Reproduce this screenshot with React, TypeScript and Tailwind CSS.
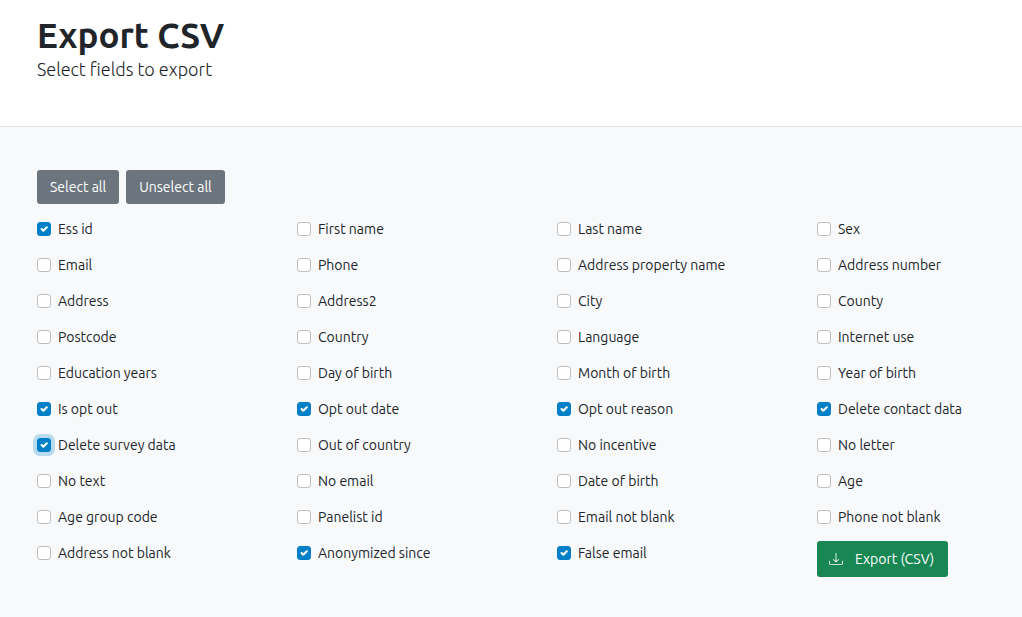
import { useState } from "react";

const FIELDS = [
  "Ess id", "First name", "Last name", "Sex",
  "Email", "Phone", "Address property name", "Address number",
  "Address", "Address2", "City", "County",
  "Postcode", "Country", "Language", "Internet use",
  "Education years", "Day of birth", "Month of birth", "Year of birth",
  "Is opt out", "Opt out date", "Opt out reason", "Delete contact data",
  "Delete survey data", "Out of country", "No incentive", "No letter",
  "No text", "No email", "Date of birth", "Age",
  "Age group code", "Panelist id", "Email not blank", "Phone not blank",
  "Address not blank", "Anonymized since", "False email",
];

const INITIAL = [
  "Ess id", "Is opt out", "Opt out date", "Opt out reason",
  "Delete contact data", "Delete survey data", "Anonymized since", "False email",
];

type FieldProps = {
  label: string;
  checked: boolean;
  focused: boolean;
  onChange: () => void;
};

function Field({ label, checked, focused, onChange }: FieldProps) {
  return (
    <label className="flex h-9 items-center gap-[7px] whitespace-nowrap">
      <span className="grid size-3.5 shrink-0">
        <input
          type="checkbox"
          checked={checked}
          autoFocus={focused}
          onChange={onChange}
          className="col-start-1 row-start-1 size-3.5 appearance-none rounded-[3px] border border-[#bfbfbf] bg-white outline-none checked:border-[#0080c8] checked:bg-[#0080c8] focus:ring-4 focus:ring-[#0080c8]/25"
        />
        {checked && (
          <svg viewBox="0 0 20 20" fill="none" aria-hidden="true" className="pointer-events-none z-10 col-start-1 row-start-1 size-3.5">
            <path d="M6.5 10l2.5 2.5 5-5" stroke="#fff" strokeWidth="3" strokeLinecap="round" strokeLinejoin="round" />
          </svg>
        )}
      </span>
      <span>{label}</span>
    </label>
  );
}

export default function App() {
  const [selected, setSelected] = useState<string[]>(INITIAL);
  const toggle = (name: string) =>
    setSelected((s) => (s.includes(name) ? s.filter((n) => n !== name) : [...s, name]));

  return (
    <div className="flex min-h-screen flex-col bg-[#f8f9fb] font-['Ubuntu','Noto_Sans',sans-serif] text-sm text-[#212529]">
      <header className="border-b border-[#dee2e6] bg-white px-[37px] pt-[15px] pb-11">
        <h1 className="font-['Ubuntu_Medium','Ubuntu','Noto_Sans',sans-serif] text-[35px] leading-[41px] font-semibold">Export CSV</h1>
        <p className="text-lg leading-[26px] font-light">Select fields to export</p>
      </header>
      <main className="pt-[43px] pr-[17px] pb-10 pl-[37px]">
        <div className="mb-[7px] flex gap-[7px]">
          <button type="button" onClick={() => setSelected(FIELDS)} className="h-[34px] rounded-[3px] bg-[#6c757d] px-[13px] text-white">
            Select all
          </button>
          <button type="button" onClick={() => setSelected([])} className="h-[34px] rounded-[3px] bg-[#6c757d] px-[13px] text-white">
            Unselect all
          </button>
        </div>
        <form onSubmit={(e) => e.preventDefault()} className="grid grid-cols-4 gap-x-18">
          {FIELDS.map((name) => (
            <Field
              key={name}
              label={name}
              checked={selected.includes(name)}
              focused={name === "Delete survey data"}
              onChange={() => toggle(name)}
            />
          ))}
          <div className="pt-1.5">
            <button type="submit" className="flex h-9 items-center gap-3 rounded-[3px] bg-[#198754] pr-3.5 pl-3 whitespace-nowrap text-white">
              <svg viewBox="0 0 16 16" fill="currentColor" aria-hidden="true" className="size-3.5">
                <path d="M.5 9.9a.5.5 0 0 1 .5.5v2.5a1 1 0 0 0 1 1h12a1 1 0 0 0 1-1v-2.5a.5.5 0 0 1 1 0v2.5a2 2 0 0 1-2 2H2a2 2 0 0 1-2-2v-2.5a.5.5 0 0 1 .5-.5z" />
                <path d="M7.646 11.854a.5.5 0 0 0 .708 0l3-3a.5.5 0 0 0-.708-.708L8.5 10.293V1.5a.5.5 0 0 0-1 0v8.793L5.354 8.146a.5.5 0 1 0-.708.708l3 3z" />
              </svg>
              Export (CSV)
            </button>
          </div>
        </form>
      </main>
    </div>
  );
}
